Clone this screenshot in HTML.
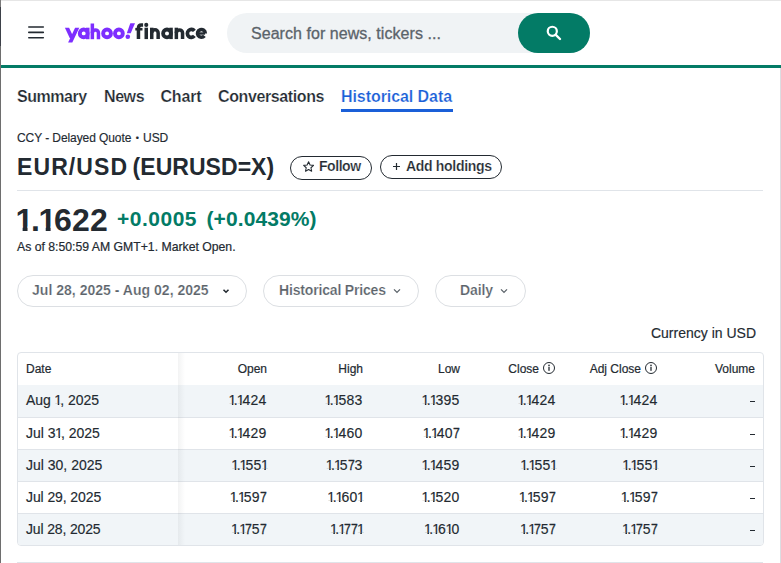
<!DOCTYPE html>
<html>
<head>
<meta charset="utf-8">
<title>EUR/USD (EURUSD=X) Historical Data - Yahoo Finance</title>
<style>
*{box-sizing:border-box;margin:0;padding:0}
html,body{width:781px;height:563px;overflow:hidden;background:#fff}
body{font-family:"Liberation Sans",sans-serif;color:#232a31;position:relative}
.abs{position:absolute;white-space:nowrap;line-height:1}
#edgeL{left:0;top:0;width:1px;height:563px;background:linear-gradient(to bottom,#7a7a7a 0,#7a7a7a 7px,#3d4149 7px,#3d4149 46px,#6e6e6e 46px,#6e6e6e 563px)}
#edgeT{left:0;top:0;width:781px;height:1px;background:#e6e6e6}
#edgeR{left:780px;top:68px;width:1px;height:495px;background:#dcdde1}
#greenline{left:1px;top:65px;width:780px;height:3px;background:#037b66}
.ham{left:28px;width:16px;height:1.5px;background:#232a31;border-radius:1px}
#search{left:227px;top:13px;width:363px;height:40px;border-radius:20px;background:#f0f3f5}
#searchtxt{left:251px;top:26px;font-size:16px;color:#5b636a;letter-spacing:0.05px;-webkit-text-stroke:0.3px #5b636a}
#searchbtn{left:518px;top:13px;width:72px;height:40px;border-radius:20px;background:#037b66}
.tab{top:89px;font-size:16px;font-weight:bold;color:#232a31;-webkit-text-stroke:0.22px #fff}
#tabul{left:341px;top:109px;width:112px;height:3px;background:#1a5fd8}
#sub{left:17px;top:132px;font-size:12px;letter-spacing:-0.08px;-webkit-text-stroke:0.15px #232a31}
#title{left:17px;top:156px;font-size:23px;font-weight:bold;letter-spacing:0.36px;word-spacing:-2.4px}
.btn{top:155px;height:24px;border:1px solid #232a31;border-radius:12px;background:#fff}
.btntxt{top:159px;font-size:14px;font-weight:bold;letter-spacing:-0.26px;-webkit-text-stroke:0.2px #fff}
#sep{left:17px;top:190px;width:746px;height:1px;background:#e0e4e9}
#price{left:17px;top:203.5px;font-size:32px;font-weight:bold;letter-spacing:0.2px}
#price i{font-style:normal;display:inline-block;width:15.6px;margin-left:-1.6px;letter-spacing:0;clip-path:polygon(0 0,18px 0,18px 23px,12.1px 23px,12.1px 32px,7.2px 32px,7.2px 23px,0 23px)}
.chg{top:207.5px;font-size:21px;font-weight:bold;color:#037b66}
#asof{left:17px;top:240.8px;font-size:12.25px;letter-spacing:-0.01px;-webkit-text-stroke:0.2px #232a31}
.pill{top:275px;height:32px;border:1px solid #dcdfe3;border-radius:16px;background:#fff}
.pilltxt{top:282.5px;font-size:14px;letter-spacing:-0.08px;font-weight:bold;color:#5b636a;-webkit-text-stroke:0.2px #fff}
#cur{right:25px;top:326px;font-size:14px;-webkit-text-stroke:0.15px #232a31}
#table{left:17px;top:352px;width:747px;height:194px;border:1px solid #e0e4e9;border-radius:4px;overflow:hidden}
.row{left:0;width:745px;height:32px;border-bottom:1px solid #e0e4e9}
.row.g{background:#f1f5f8}
.th{font-size:12px;top:10px;-webkit-text-stroke:0.2px #232a31}
.td{font-size:14px;top:8px;letter-spacing:0.2px;-webkit-text-stroke:0.15px #232a31}
.td i{font-style:normal;display:inline-block;width:5.9px;margin-left:-0.5px;letter-spacing:0;clip-path:polygon(0 0,7px 0,7px 10.6px,4.95px 10.6px,4.95px 14px,3.4px 14px,3.4px 10.6px,0 10.6px)}
.td b{font-weight:normal;letter-spacing:-1.1px;margin-left:-0.6px;margin-right:0.6px}
.td.d{letter-spacing:0}
.td i.e{width:5.6px}
.td u{text-decoration:none;display:inline-block;width:6.7px;transform:scaleX(0.87);transform-origin:0 50%;letter-spacing:0;-webkit-text-stroke:0.3px #232a31}
.r{text-align:right}
.dash{right:8px;top:15.5px;width:5.2px;height:1.4px;background:#232a31}
#shadow{left:160px;top:0;width:7px;height:192px;background:linear-gradient(to right,rgba(35,42,49,0.055),rgba(35,42,49,0))}
#botline{left:17px;top:562px;width:746px;height:1px;background:#e0e4e9}
</style>
</head>
<body>
<div class="abs" id="edgeT"></div>
<div class="abs" id="edgeL"></div>
<div class="abs" id="edgeR"></div>


<svg class="abs" style="left:24px;top:20px" width="24" height="24" viewBox="0 0 24 24"><path d="M4.8 7H19.3M4.8 12.4H19.3M4.8 17.8H19.3" stroke="#232a31" stroke-width="1.6" stroke-linecap="round" fill="none"/></svg>
<svg class="abs" id="logo" style="left:0;top:0" width="220" height="60" viewBox="0 0 220 60">
  <g fill="#7d2eff" stroke="none">
    <path d="M64.9 27.7h4.2l4.8 10.3h-4.2z"/>
    <path d="M75.1 27.7h4.2l-7 14.9h-4.2z"/>
    <rect x="86" y="27.7" width="3.5" height="11.5"/>
    <rect x="90.6" y="23.5" width="3.5" height="15.7"/>
    <path d="M130.3 23.3h4.7l-4.3 10h-3.9z"/>
    <circle cx="127.8" cy="36.7" r="2.3"/>
  </g>
  <g fill="none" stroke="#7d2eff" stroke-width="3.5">
    <circle cx="83.7" cy="33.4" r="3.9" stroke-width="3.9"/>
    <path d="M92.35 33 A3.05 3.05 0 0 1 98.45 33 V39.2"/>
    <circle cx="107.05" cy="33.4" r="3.9" stroke-width="3.9"/>
    <circle cx="118.9" cy="33.4" r="3.9" stroke-width="3.9"/>
  </g>
  <g fill="#232a31" stroke="none">
    <rect x="135.3" y="27.9" width="7.2" height="2.6"/>
    <rect x="144.5" y="27.7" width="3.5" height="11.4"/>
    <circle cx="146.25" cy="24.9" r="2.05"/>
    <rect x="150" y="27.7" width="3.5" height="11.4"/>
    <rect x="169.3" y="27.7" width="3.5" height="11.4"/>
    <rect x="174.6" y="27.7" width="3.5" height="11.4"/>
    <rect x="198.5" y="32.3" width="6.6" height="2.4"/>
  </g>
  <g fill="none" stroke="#232a31" stroke-width="3.5">
    <path d="M138.45 39.1 V28 Q138.45 25.05 141.4 25.05 H143.1"/>
    <path d="M151.75 33 A3.2 3.2 0 0 1 158.15 33 V39.1"/>
    <circle cx="167" cy="33.4" r="3.9" stroke-width="3.8"/>
    <path d="M176.35 33 A3.1 3.1 0 0 1 182.55 33 V39.1"/>
    <path d="M194.4 30.9 A3.95 3.95 0 1 0 194.4 35.9" stroke-width="3.7"/>
    <path d="M205.3 33.4 A3.9 3.9 0 1 0 204.4 35.9" stroke-width="3.6"/>
  </g>
</svg>

<div class="abs" id="search"></div>
<div class="abs" id="searchtxt">Search for news, tickers ...</div>
<div class="abs" id="searchbtn"></div>
<svg class="abs" style="left:546px;top:25px" width="16" height="16" viewBox="0 0 16 16">
  <circle cx="6.3" cy="6.3" r="4.55" fill="none" stroke="#fff" stroke-width="2.2"/>
  <line x1="9.8" y1="9.8" x2="14" y2="14" stroke="#fff" stroke-width="2.4" stroke-linecap="round"/>
</svg>
<div class="abs" id="greenline"></div>

<div class="abs tab" style="left:17px;letter-spacing:-0.46px">Summary</div>
<div class="abs tab" style="left:104px;letter-spacing:-0.42px">News</div>
<div class="abs tab" style="left:160.5px;letter-spacing:-0.18px">Chart</div>
<div class="abs tab" style="left:218px;letter-spacing:-0.39px">Conversations</div>
<div class="abs tab" style="left:341px;color:#1a5fd8;letter-spacing:-0.07px">Historical Data</div>
<div class="abs" id="tabul"></div>

<div class="abs" id="sub">CCY - Delayed Quote<span style="font-size:9px;letter-spacing:0;margin:0 4.2px 0 4.4px;position:relative;top:-1px">&bull;</span>USD</div>
<div class="abs" id="title"><span style="letter-spacing:1.1px">EUR/USD</span> <span style="letter-spacing:0.04px">(EURUSD=X)</span></div>

<div class="abs btn" style="left:290px;width:82px;top:156px"></div>
<svg class="abs" style="left:301.5px;top:160.4px" width="13.2" height="13.2" viewBox="0 0 24 24">
  <path d="M12 3.2l2.7 5.9 6.3.7-4.7 4.3 1.3 6.3L12 17.2l-5.6 3.2 1.3-6.3L3 9.8l6.3-.7z" fill="none" stroke="#232a31" stroke-width="1.9" stroke-linejoin="round"/>
</svg>
<div class="abs btntxt" style="left:319px;letter-spacing:-0.45px">Follow</div>
<div class="abs btn" style="left:380px;width:122px"></div>
<svg class="abs" style="left:392px;top:162px" width="9" height="9" viewBox="0 0 9 9"><path d="M1 4.5H8M4.5 1V8" stroke="#232a31" stroke-width="1.2" fill="none"/></svg>
<div class="abs btntxt" style="left:406px;letter-spacing:-0.31px">Add holdings</div>

<div class="abs" id="sep"></div>

<div class="abs" id="price"><i>1</i>.<i>1</i>622</div>
<div class="abs chg" style="left:117px;letter-spacing:0.5px">+0.0005</div>
<div class="abs chg" style="left:206.5px;letter-spacing:0.1px">(+0.0439%)</div>
<div class="abs" id="asof">As of 8:50:59 AM GMT+1. Market Open.</div>

<div class="abs pill" style="left:17px;width:230px"></div>
<div class="abs pilltxt" style="left:32px;letter-spacing:0.02px">Jul 28, 2025 - Aug 02, 2025</div>
<svg class="abs chev" style="left:220px;top:285px" width="12" height="12" viewBox="0 0 12 12"><path d="M3.5 4.7L6 7.2L8.5 4.7" fill="none" stroke="#232a31" stroke-width="1.6"/></svg>
<div class="abs pill" style="left:263px;width:156px"></div>
<div class="abs pilltxt" style="left:279px;letter-spacing:-0.17px">Historical Prices</div>
<svg class="abs chev" style="left:391px;top:285px" width="12" height="12" viewBox="0 0 12 12"><path d="M3 4.4L6 7.4L9 4.4" fill="none" stroke="#5b636a" stroke-width="1.3"/></svg>
<div class="abs pill" style="left:435px;width:91px"></div>
<div class="abs pilltxt" style="left:460px">Daily</div>
<svg class="abs chev" style="left:498.2px;top:285px" width="12" height="12" viewBox="0 0 12 12"><path d="M3 4.4L6 7.4L9 4.4" fill="none" stroke="#5b636a" stroke-width="1.3"/></svg>

<div class="abs" id="cur">Currency in USD</div>

<div class="abs" id="table">
  <div class="abs row" style="top:0;border-bottom:none">
    <div class="abs th" style="left:8px">Date</div>
    <div class="abs th r" style="right:496px">Open</div>
    <div class="abs th r" style="right:400px">High</div>
    <div class="abs th r" style="right:303px">Low</div>
    <div class="abs th r" style="right:224px">Close</div>
    <svg class="abs" style="left:524.4px;top:7.6px" width="14" height="14" viewBox="0 0 14 14"><circle cx="7" cy="7" r="5.5" fill="none" stroke="#232a31" stroke-width="1"/><circle cx="7" cy="4.4" r="0.8" fill="#232a31"/><rect x="6.35" y="5.8" width="1.3" height="4" fill="#232a31"/></svg>
    <div class="abs th r" style="right:122px">Adj Close</div>
    <svg class="abs" style="left:626.4px;top:7.6px" width="14" height="14" viewBox="0 0 14 14"><circle cx="7" cy="7" r="5.5" fill="none" stroke="#232a31" stroke-width="1"/><circle cx="7" cy="4.4" r="0.8" fill="#232a31"/><rect x="6.35" y="5.8" width="1.3" height="4" fill="#232a31"/></svg>
    <div class="abs th r" style="right:8px">Volume</div>
  </div>
  <div class="abs row g" style="top:32px;height:33px">
    <div class="abs td d" style="left:8px">Aug <i>1</i>, 2025</div>
    <div class="abs td r" style="right:496.5px"><i>1</i><b>.</b><i>1</i>424</div>
    <div class="abs td r" style="right:400.5px"><i>1</i><b>.</b><i>1</i>583</div>
    <div class="abs td r" style="right:303.5px"><i>1</i><b>.</b><i>1</i>395</div>
    <div class="abs td r" style="right:207.5px"><i>1</i><b>.</b><i>1</i>424</div>
    <div class="abs td r" style="right:105.5px"><i>1</i><b>.</b><i>1</i>424</div>
    <div class="abs dash"></div>
  </div>
  <div class="abs row" style="top:65px;height:32px">
    <div class="abs td d" style="left:8px">Jul 3<i>1</i>, 2025</div>
    <div class="abs td r" style="right:496.5px"><i>1</i><b>.</b><i>1</i>429</div>
    <div class="abs td r" style="right:400.5px"><i>1</i><b>.</b><i>1</i>460</div>
    <div class="abs td r" style="right:303.5px"><i>1</i><b>.</b><i>1</i>40<u>7</u></div>
    <div class="abs td r" style="right:207.5px"><i>1</i><b>.</b><i>1</i>429</div>
    <div class="abs td r" style="right:105.5px"><i>1</i><b>.</b><i>1</i>429</div>
    <div class="abs dash"></div>
  </div>
  <div class="abs row g" style="top:97px;height:32px">
    <div class="abs td d" style="left:8px">Jul 30, 2025</div>
    <div class="abs td r" style="right:496.5px"><i>1</i><b>.</b><i>1</i>55<i class="e">1</i></div>
    <div class="abs td r" style="right:400.5px"><i>1</i><b>.</b><i>1</i>5<u>7</u>3</div>
    <div class="abs td r" style="right:303.5px"><i>1</i><b>.</b><i>1</i>459</div>
    <div class="abs td r" style="right:207.5px"><i>1</i><b>.</b><i>1</i>55<i class="e">1</i></div>
    <div class="abs td r" style="right:105.5px"><i>1</i><b>.</b><i>1</i>55<i class="e">1</i></div>
    <div class="abs dash"></div>
  </div>
  <div class="abs row" style="top:129px;height:32px">
    <div class="abs td d" style="left:8px;letter-spacing:-0.1px">Jul 29, 2025</div>
    <div class="abs td r" style="right:496.5px"><i>1</i><b>.</b><i>1</i>59<u>7</u></div>
    <div class="abs td r" style="right:400.5px"><i>1</i><b>.</b><i>1</i>60<i class="e">1</i></div>
    <div class="abs td r" style="right:303.5px"><i>1</i><b>.</b><i>1</i>520</div>
    <div class="abs td r" style="right:207.5px"><i>1</i><b>.</b><i>1</i>59<u>7</u></div>
    <div class="abs td r" style="right:105.5px"><i>1</i><b>.</b><i>1</i>59<u>7</u></div>
    <div class="abs dash"></div>
  </div>
  <div class="abs row g" style="top:161px;height:31px;border-bottom:none">
    <div class="abs td d" style="left:8px;letter-spacing:-0.15px">Jul 28, 2025</div>
    <div class="abs td r" style="right:496.5px"><i>1</i><b>.</b><i>1</i><u>7</u>5<u>7</u></div>
    <div class="abs td r" style="right:400.5px"><i>1</i><b>.</b><i>1</i><u>7</u><u>7</u><i class="e">1</i></div>
    <div class="abs td r" style="right:303.5px"><i>1</i><b>.</b><i>1</i>6<i>1</i>0</div>
    <div class="abs td r" style="right:207.5px"><i>1</i><b>.</b><i>1</i><u>7</u>5<u>7</u></div>
    <div class="abs td r" style="right:105.5px"><i>1</i><b>.</b><i>1</i><u>7</u>5<u>7</u></div>
    <div class="abs dash"></div>
  </div>
  <div class="abs" id="shadow"></div>
</div>

<div class="abs" id="botline"></div>
</body>
</html>
